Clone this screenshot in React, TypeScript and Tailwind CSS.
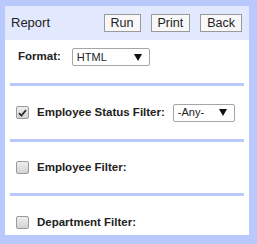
import React from "react";

const Caret: React.FC = () => (
    <svg width="8" height="7" viewBox="0 0 8 7" className="shrink-0">
        <polygon points="0,0 8,0 4,7" fill="#111" />
    </svg>
);

const FakeSelect: React.FC<{ value: string; width: string }> = ({ value, width }) => (
    <div
        className={`flex h-[18px] items-center justify-between rounded-[2px] border border-[#a6a6a6] bg-white pl-[4px] pr-[7px] text-[11px] text-[#222] ${width}`}
    >
        <span>{value}</span>
        <Caret />
    </div>
);

const Check: React.FC<{ checked?: boolean }> = ({ checked }) => (
    <div className="flex h-[13px] w-[13px] shrink-0 items-center justify-center rounded-[2px] border border-[#9a9a9a] bg-gradient-to-b from-[#eeeeee] to-[#d4d4d4]">
        {checked && (
            <svg width="9" height="8" viewBox="0 0 9 8">
                <path d="M1 4.2 L3.4 6.6 L8 1.2" stroke="#333" strokeWidth="1.8" fill="none" />
            </svg>
        )}
    </div>
);

const Divider: React.FC = () => <div className="mx-[5px] h-[3px] bg-[#b9c9fe]" />;

const Btn: React.FC<{ label: string }> = ({ label }) => (
    <button className="h-[18px] border border-[#9a9a9a] bg-[#f8f8f8] px-[6px] text-[12.5px] leading-[16px] text-[#222]">
        {label}
    </button>
);

export default function App() {
    return (
        <div
            className="h-[244px] w-[257px] bg-[#b9c9fe] pl-[5px] pt-[6px] text-[#222]"
            style={{ fontFamily: '"Liberation Sans", Arial, sans-serif' }}
        >
            <div className="flex h-[229px] w-[244px] flex-col bg-white">
                <div className="flex h-[34px] items-center justify-between bg-[#e2e8fe] pl-[6px] pr-[7px]">
                    <span className="text-[13px]">Report</span>
                    <div className="flex gap-[10px]">
                        <Btn label="Run" />
                        <Btn label="Print" />
                        <Btn label="Back" />
                    </div>
                </div>

                <div className="h-[43px] pl-[13px] pt-[8px]">
                    <div className="flex h-[18px] items-center gap-[11px]">
                        <span className="text-[11.5px] font-bold">Format:</span>
                        <FakeSelect value="HTML" width="w-[78px]" />
                    </div>
                </div>
                <Divider />

                <div className="flex h-[53px] items-center gap-[8px] pl-[11px]">
                    <Check checked />
                    <span className="text-[11.5px] font-bold">Employee Status Filter:</span>
                    <FakeSelect value="-Any-" width="w-[62px]" />
                </div>
                <Divider />

                <div className="flex h-[51px] items-center gap-[8px] pl-[11px]">
                    <Check />
                    <span className="text-[11.5px] font-bold">Employee Filter:</span>
                </div>
                <Divider />

                <div className="flex items-center gap-[8px] pl-[11px] pt-[18px]">
                    <Check />
                    <span className="text-[11.5px] font-bold">Department Filter:</span>
                </div>
            </div>
        </div>
    );
}
